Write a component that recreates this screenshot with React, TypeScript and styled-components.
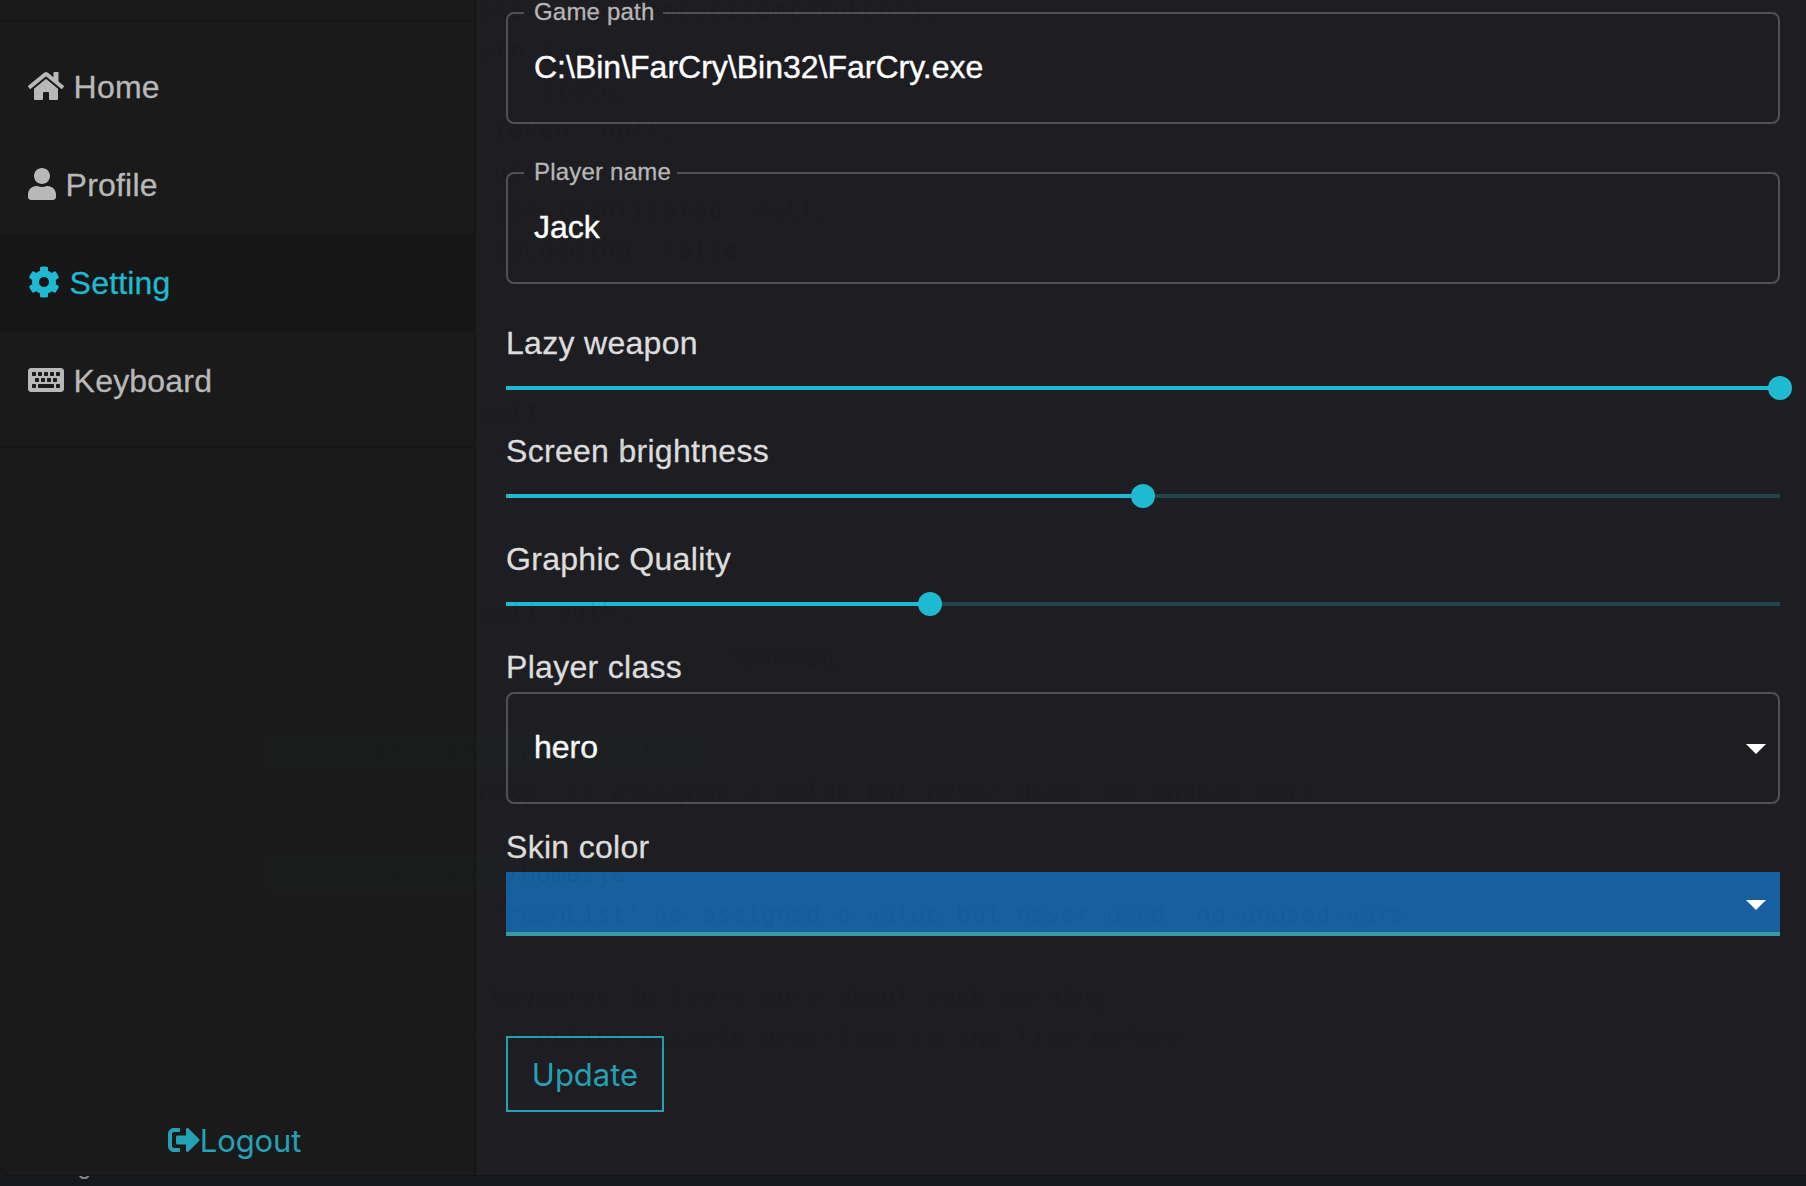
import React from "react";
import styled, { createGlobalStyle } from "styled-components";
import { FaHome, FaUser, FaCog, FaKeyboard, FaSignOutAlt } from "react-icons/fa";

const GlobalStyle = createGlobalStyle`
  *, *::before, *::after { box-sizing: border-box; }
  html, body { margin: 0; padding: 0; background: #161a1e; overflow: hidden; }
  body { font-family: "Liberation Sans", Arial, sans-serif; }
`;

const Screen = styled.div`
  position: relative;
  width: 1806px;
  height: 1186px;
  background: #161a1e;
  overflow: hidden;
`;

const AppWindow = styled.div`
  display: flex;
  height: 1176px;
  border-bottom: 1px solid #131416;
  border-bottom-left-radius: 10px;
  overflow: hidden;
`;

/* Sliver of the status bar that shows below the window. */
const StatusStrip = styled.div`
  height: 10px;
  overflow: hidden;
`;

const StatusText = styled.div`
  margin-top: -26px;
  color: #85868a;
  font-size: 25px;
  line-height: 30px;
  letter-spacing: 0.15px;
  white-space: nowrap;
`;

const Sidebar = styled.aside`
  display: flex;
  flex-direction: column;
  flex: none;
  width: 476px;
  background: #1a1a1a;
  border-right: 2px solid #171717;
`;

const SidebarTop = styled.div`
  height: 22px;
  border-bottom: 2px solid #161616;
`;

const NavList = styled.nav`
  display: flex;
  flex-direction: column;
  padding: 16px 0;
  border-bottom: 2px solid #161616;
`;

const NavItem = styled.a<{ $active?: boolean; $iconWidth: number }>`
  display: block;
  height: 98px;
  padding-left: 28px;
  line-height: 98px;
  font-size: 32px;
  letter-spacing: 0.2px;
  white-space: pre;
  -webkit-text-stroke: 0.3px currentColor;
  color: ${(p) => (p.$active ? "#1fb9d1" : "#b8b8b8")};
  background: ${(p) => (p.$active ? "#161616" : "transparent")};

  svg {
    width: ${(p) => p.$iconWidth}px;
    height: 32px;
    margin-right: 0.5px;
    vertical-align: -4px;
    stroke-width: 0;
  }
`;

const LogoutButton = styled.button`
  display: flex;
  align-items: center;
  align-self: center;
  margin: auto 5px 14px 0;
  padding: 0;
  border: 0;
  background: none;
  color: #25a0b5;
  font: 31px/40px Inter, "Liberation Sans", sans-serif;
  letter-spacing: -0.15px;

  svg {
    width: 32px;
    height: 32px;
    margin-top: -2px;
  }
`;

const Main = styled.main`
  display: flex;
  flex-direction: column;
  flex: 1;
  padding: 12px 26px 0 30px;
  background: #1e1d21;
`;

const OutlinedBox = styled.div<{ $gap: number }>`
  position: relative;
  display: flex;
  align-items: center;
  justify-content: space-between;
  flex: none;
  height: 112px;
  margin-bottom: ${(p) => p.$gap}px;
  padding: 0 12px 2px 26px;
  border: 2px solid #515153;
  border-radius: 8px;
  color: #fff;
  font-size: 32px;
  line-height: 38px;
  -webkit-text-stroke: 0.4px currentColor;
`;

const FloatingLabel = styled.span<{ $width: number }>`
  position: absolute;
  left: 16px;
  top: -16px;
  width: ${(p) => p.$width}px;
  padding-left: 10px;
  background: #1e1d21;
  color: #b8b8b8;
  font-size: 24px;
  line-height: 28px;
  letter-spacing: 0.2px;
  white-space: nowrap;
  -webkit-text-stroke: 0.3px currentColor;
`;

const Label = styled.label`
  flex: none;
  height: 48px;
  color: #dddddd;
  font-size: 32px;
  line-height: 46px;
  letter-spacing: 0.3px;
  -webkit-text-stroke: 0.3px currentColor;
`;

const SliderRow = styled.div`
  flex: none;
  height: 60px;
  padding-top: 18px;
`;

const Rail = styled.div`
  display: flex;
  align-items: center;
  height: 4px;
  background: #1f464d;
`;

const Track = styled.div`
  flex: none;
  height: 4px;
  background: #1fb9d1;
`;

const Thumb = styled.div`
  flex: none;
  width: 24px;
  height: 24px;
  margin-left: -12.4px;
  border-radius: 50%;
  background: #1fb9d1;
`;

const ColorSelect = styled.div`
  display: flex;
  align-items: center;
  justify-content: flex-end;
  flex: none;
  height: 64px;
  margin-bottom: 100px;
  padding: 6px 14px 0 0;
  background: #185f9f;
  border-bottom: 4px solid #3a9aa3;
`;

const Caret = styled.span`
  width: 0;
  height: 0;
  border: 10px solid transparent;
  border-top-color: #fff;
  border-bottom: 0;

  ${OutlinedBox} & {
    margin-top: 4px;
  }
`;

const UpdateButton = styled.button`
  flex: none;
  align-self: flex-start;
  width: 158px;
  height: 76px;
  padding: 2px 0 0;
  border: 2px solid #25a0b5;
  background: transparent;
  color: #25a0b5;
  font: 31px/38px Inter, "Liberation Sans", sans-serif;
`;

/* Faint see-through text of the windows lying behind the translucent app. */
const Ghost = styled.div`
  position: absolute;
  inset: 0;
  pointer-events: none;
  color: rgba(10, 10, 14, 0.07);
  font: 25px/40px "DejaVu Sans Mono", "Liberation Mono", monospace;
  white-space: pre;
`;

const GhostLine = styled.span<{ $x: number; $y: number; $mark?: boolean; $editor?: boolean; $blue?: boolean }>`
  position: absolute;
  left: ${(p) => p.$x}px;
  top: ${(p) => p.$y}px;
  letter-spacing: ${(p) => (p.$editor ? 0.3 : -0.05)}px;
  color: ${(p) => (p.$blue ? "rgba(10, 40, 60, 0.07)" : "inherit")};
  background: ${(p) => (p.$mark ? "rgba(60, 110, 120, 0.025)" : "none")};
`;

const GHOST_LINES: { x: number; y: number; text: string; mark?: boolean; blue?: boolean }[] = [
  { x: 433, y: -9, text: "localStorage.removeItem('token');" },
  { x: 433, y: 31, text: "return {" },
  { x: 493, y: 71, text: "...state," },
  { x: 493, y: 111, text: "token: null," },
  { x: 493, y: 151, text: "user: null," },
  { x: 493, y: 191, text: "isAuthenticated: null," },
  { x: 493, y: 231, text: "isLoading: false" },
  { x: 433, y: 272, text: "};" },
  { x: 433, y: 392, text: "default:" },
  { x: 493, y: 432, text: "return state;" },
  { x: 433, y: 592, text: "default auth;" },
  { x: 266, y: 731, text: "./src/components/Navigator.js", mark: true },
  { x: 266, y: 772, text: "  Line 10:  'proxy' is assigned a value but never used  no-unused-vars" },
  { x: 266, y: 854, text: "./src/components/Home.js", mark: true },
  { x: 266, y: 895, text: "  Line 22:  'refreshList' is assigned a value but never used  no-unused-vars", blue: true },
  { x: 266, y: 977, text: "Search for the keywords to learn more about each warning." },
  { x: 266, y: 1018, text: "To ignore, add // eslint-disable-next-line to the line before." },
];

const GhostTab = styled.span`
  position: absolute;
  left: 729px;
  top: 639px;
  font: 23px/40px "Liberation Sans", sans-serif;
  letter-spacing: -0.6px;
`;

const NAV = [
  { icon: <FaHome />, width: 36, label: "Home" },
  { icon: <FaUser />, width: 28, label: "Profile" },
  { icon: <FaCog />, width: 32, label: "Setting", active: true },
  { icon: <FaKeyboard />, width: 36, label: "Keyboard" },
];

const SLIDERS = [
  { label: "Lazy weapon", value: 100 },
  { label: "Screen brightness", value: 50 },
  { label: "Graphic Quality", value: 33.33 },
];

function Slider({ value }: { value: number }) {
  return (
    <SliderRow>
      <Rail>
        <Track style={{ width: `${value}%` }} />
        <Thumb />
      </Rail>
    </SliderRow>
  );
}

export default function App() {
  return (
    <Screen>
      <GlobalStyle />
      <AppWindow>
        <Sidebar>
          <SidebarTop />
          <NavList>
            {NAV.map((item) => (
              <NavItem key={item.label} $active={item.active} $iconWidth={item.width}>
                {item.icon} {item.label}
              </NavItem>
            ))}
          </NavList>
          <LogoutButton>
            <FaSignOutAlt />
            Logout
          </LogoutButton>
        </Sidebar>
        <Main>
          <OutlinedBox $gap={48}>
            <FloatingLabel $width={139}>Game path</FloatingLabel>
            C:\Bin\FarCry\Bin32\FarCry.exe
          </OutlinedBox>
          <OutlinedBox $gap={36}>
            <FloatingLabel $width={153}>Player name</FloatingLabel>
            Jack
          </OutlinedBox>
          {SLIDERS.map((s) => (
            <React.Fragment key={s.label}>
              <Label>{s.label}</Label>
              <Slider value={s.value} />
            </React.Fragment>
          ))}
          <Label>Player class</Label>
          <OutlinedBox $gap={20}>
            hero
            <Caret />
          </OutlinedBox>
          <Label>Skin color</Label>
          <ColorSelect>
            <Caret />
          </ColorSelect>
          <UpdateButton>Update</UpdateButton>
        </Main>
      </AppWindow>
      <StatusStrip>
        <StatusText>ct Postgres Server</StatusText>
      </StatusStrip>
      <Ghost aria-hidden="true">
        {GHOST_LINES.map((l) => (
          <GhostLine key={l.y} $x={l.x} $y={l.y} $mark={l.mark} $blue={l.blue} $editor={l.y < 600}>
            {l.text}
          </GhostLine>
        ))}
        <GhostTab>TERMINAL</GhostTab>
      </Ghost>
    </Screen>
  );
}
